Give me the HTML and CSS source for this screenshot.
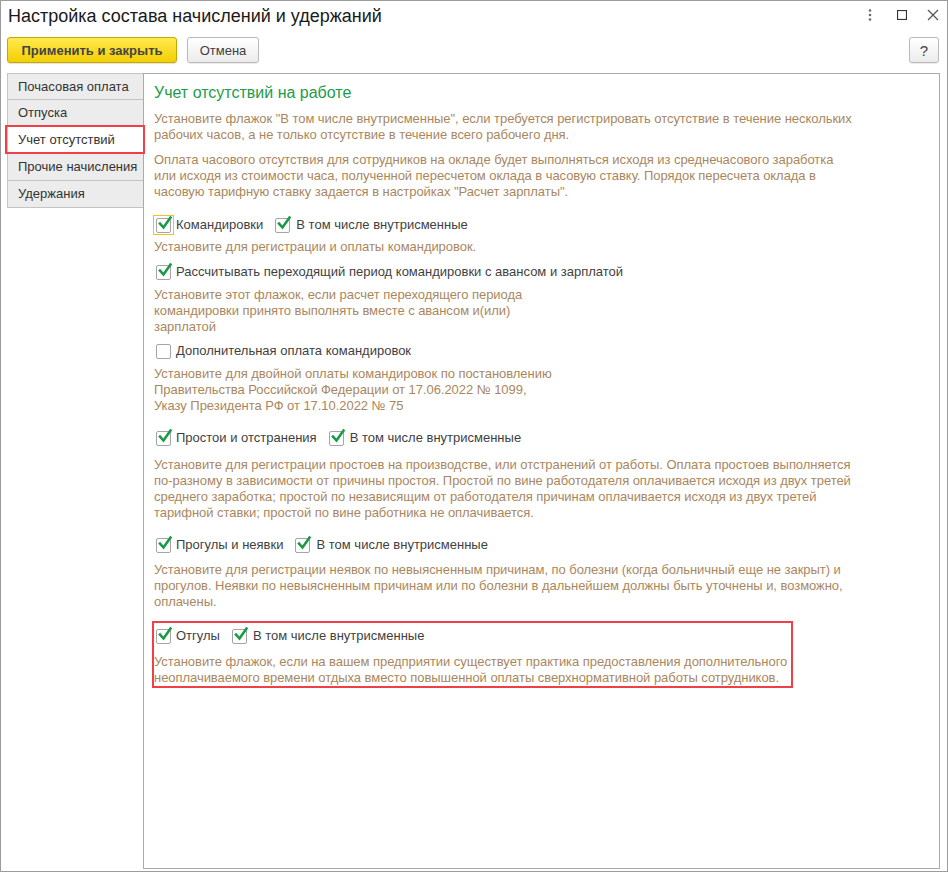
FILE: index.html
```html
<!DOCTYPE html>
<html lang="ru">
<head>
<meta charset="utf-8">
<title>Настройка состава начислений и удержаний</title>
<link rel="stylesheet" href="styles.css">
</head>
<body>
<div class="window">
  <div class="titlebar">
    <div class="title">Настройка состава начислений и удержаний</div>
    <div class="win-icons">
      <svg class="ic-more" width="4" height="12" viewBox="0 0 4 12"><circle cx="2" cy="1.5" r="1.3"/><circle cx="2" cy="6" r="1.3"/><circle cx="2" cy="10.5" r="1.3"/></svg>
      <svg class="ic-max" width="10" height="10" viewBox="0 0 10 10"><rect x="0.5" y="0.5" width="9" height="9"/></svg>
      <svg class="ic-close" width="12" height="12" viewBox="0 0 12 12"><path d="M1 1 L11 11 M11 1 L1 11"/></svg>
    </div>
  </div>
  <div class="toolbar">
    <button class="btn btn-primary">Применить и закрыть</button>
    <button class="btn btn-cancel">Отмена</button>
    <button class="btn btn-help">?</button>
  </div>
  <div class="main">
    <div class="sidebar">
      <div class="tab">Почасовая оплата</div>
      <div class="tab">Отпуска</div>
      <div class="tab tab-active">Учет отсутствий</div>
      <div class="tab">Прочие начисления</div>
      <div class="tab">Удержания</div>
    </div>
    <div class="panel">
      <h1 class="panel-title">Учет отсутствий на работе</h1>
      <p class="note mt8">Установите флажок "В том числе внутрисменные", если требуется регистрировать отсутствие в течение нескольких<br>рабочих часов, а не только отсутствие в течение всего рабочего дня.</p>
      <p class="note mt9">Оплата часового отсутствия для сотрудников на окладе будет выполняться исходя из среднечасового заработка<br>или исходя из стоимости часа, полученной пересчетом оклада в часовую ставку. Порядок пересчета оклада в<br>часовую тарифную ставку задается в настройках "Расчет зарплаты".</p>

      <div class="row mt15">
        <span class="cb cb-focus"><span class="box"><svg class="check" viewBox="0 0 16 16"><path d="M3 7.5 L6.5 11.5 L13.5 1.5"/></svg></span></span>
        <span class="label">Командировки</span>
        <span class="cb cb-next"><span class="box"><svg class="check" viewBox="0 0 16 16"><path d="M3 7.5 L6.5 11.5 L13.5 1.5"/></svg></span></span>
        <span class="label">В том числе внутрисменные</span>
      </div>
      <p class="note mt4">Установите для регистрации и оплаты командировок.</p>

      <div class="row mt7">
        <span class="cb"><span class="box"><svg class="check" viewBox="0 0 16 16"><path d="M3 7.5 L6.5 11.5 L13.5 1.5"/></svg></span></span>
        <span class="label">Рассчитывать переходящий период командировки с авансом и зарплатой</span>
      </div>
      <p class="note mt5">Установите этот флажок, если расчет переходящего периода<br>командировки принято выполнять вместе с авансом и(или)<br>зарплатой</p>

      <div class="row mt6">
        <span class="cb"><span class="box"></span></span>
        <span class="label">Дополнительная оплата командировок</span>
      </div>
      <p class="note mt5">Установите для двойной оплаты командировок по постановлению<br>Правительства Российской Федерации от 17.06.2022 № 1099,<br>Указу Президента РФ от 17.10.2022 № 75</p>

      <div class="row mt14">
        <span class="cb"><span class="box"><svg class="check" viewBox="0 0 16 16"><path d="M3 7.5 L6.5 11.5 L13.5 1.5"/></svg></span></span>
        <span class="label">Простои и отстранения</span>
        <span class="cb cb-next"><span class="box"><svg class="check" viewBox="0 0 16 16"><path d="M3 7.5 L6.5 11.5 L13.5 1.5"/></svg></span></span>
        <span class="label">В том числе внутрисменные</span>
      </div>
      <p class="note mt9">Установите для регистрации простоев на производстве, или отстранений от работы. Оплата простоев выполняется<br>по-разному в зависимости от причины простоя. Простой по вине работодателя оплачивается исходя из двух третей<br>среднего заработка; простой по независящим от работодателя причинам оплачивается исходя из двух третей<br>тарифной ставки; простой по вине работника не оплачивается.</p>

      <div class="row mt14">
        <span class="cb"><span class="box"><svg class="check" viewBox="0 0 16 16"><path d="M3 7.5 L6.5 11.5 L13.5 1.5"/></svg></span></span>
        <span class="label">Прогулы и неявки</span>
        <span class="cb cb-next"><span class="box"><svg class="check" viewBox="0 0 16 16"><path d="M3 7.5 L6.5 11.5 L13.5 1.5"/></svg></span></span>
        <span class="label">В том числе внутрисменные</span>
      </div>
      <p class="note mt7">Установите для регистрации неявок по невыясненным причинам, по болезни (когда больничный еще не закрыт) и<br>прогулов. Неявки по невыясненным причинам или по болезни в дальнейшем должны быть уточнены и, возможно,<br>оплачены.</p>

      <div class="highlight">
        <div class="row">
          <span class="cb"><span class="box"><svg class="check" viewBox="0 0 16 16"><path d="M3 7.5 L6.5 11.5 L13.5 1.5"/></svg></span></span>
          <span class="label">Отгулы</span>
          <span class="cb cb-next"><span class="box"><svg class="check" viewBox="0 0 16 16"><path d="M3 7.5 L6.5 11.5 L13.5 1.5"/></svg></span></span>
          <span class="label">В том числе внутрисменные</span>
        </div>
        <p class="note mt8">Установите флажок, если на вашем предприятии существует практика предоставления дополнительного<br>неоплачиваемого времени отдыха вместо повышенной оплаты сверхнормативной работы сотрудников.</p>
      </div>
    </div>
  </div>
</div>
</body>
</html>
```

FILE: styles.css
```css
* { box-sizing: border-box; }

html, body {
  margin: 0;
  padding: 0;
  background: #ffffff;
}

body {
  font-family: "Liberation Sans", Arial, sans-serif;
  font-size: 13px;
  color: #404040;
}

.window {
  width: 948px;
  height: 872px;
  border: 1px solid #9c9c9c;
  display: flex;
  flex-direction: column;
  background: #fff;
}

.titlebar {
  height: 30px;
  display: flex;
  align-items: center;
  padding: 0 6px 0 7px;
}

.title {
  flex: 1;
  font-size: 18px;
  color: #1a1a1a;
}

.win-icons {
  display: flex;
  align-items: center;
  margin-top: -2px;
}

.ic-more { fill: #6b6b6b; margin-right: 25px; }
.ic-max { fill: none; stroke: #333; stroke-width: 1.2; margin-right: 20px; }
.ic-close { fill: none; stroke: #555; stroke-width: 1.2; margin-right: 2px; }

.toolbar {
  display: flex;
  align-items: center;
  padding: 6px 8px 0 6px;
  gap: 10px;
}

.btn {
  height: 26px;
  font-family: "Liberation Sans", Arial, sans-serif;
  font-size: 13px;
  border-radius: 3px;
  padding: 0;
  cursor: default;
}

.btn-primary {
  width: 170px;
  font-weight: bold;
  color: #444;
  background: linear-gradient(#ffe94e, #f4cf05);
  border: 1px solid #c5a900;
  box-shadow: 0 1px 1px rgba(0,0,0,0.12);
}

.btn-cancel {
  width: 72px;
  color: #404040;
  background: linear-gradient(#ffffff, #ececec);
  border: 1px solid #b9b9b9;
  box-shadow: 0 1px 1px rgba(0,0,0,0.08);
}

.btn-help {
  width: 30px;
  margin-left: auto;
  font-size: 15px;
  color: #404040;
  background: linear-gradient(#ffffff, #ececec);
  border: 1px solid #b9b9b9;
  box-shadow: 0 1px 1px rgba(0,0,0,0.08);
}

.main {
  flex: 1;
  display: flex;
  margin-top: 10px;
  padding: 0 7px 2px 6px;
}

.sidebar {
  width: 136px;
  flex-shrink: 0;
  display: flex;
  flex-direction: column;
}

.tab {
  position: relative;
  height: 27px;
  line-height: 26px;
  padding-left: 10px;
  background: #ececec;
  border: 1px solid #c4c4c4;
  border-top: none;
  border-right: none;
  color: #333;
  font-size: 13px;
  white-space: nowrap;
}

.tab:first-child {
  border-top: 1px solid #c4c4c4;
}

.tab-active {
  background: #ffffff;
}

.tab-active::after {
  content: "";
  position: absolute;
  left: -3px;
  right: -2px;
  top: -2px;
  bottom: -1px;
  border: 2px solid #ef4048;
}

.panel {
  flex: 1;
  border: 1px solid #ababab;
  padding: 9px 10px 0 10px;
}

.panel-title {
  margin: 0;
  height: 20px;
  line-height: 20px;
  font-size: 16px;
  font-weight: normal;
  color: #1d9c4b;
}

.note {
  margin: 0;
  line-height: 16px;
  font-size: 13px;
  letter-spacing: -0.05px;
  color: #a9875e;
  white-space: nowrap;
}

.row {
  display: flex;
  align-items: center;
  height: 20px;
}

.label {
  color: #3f3f3f;
  line-height: 16px;
  white-space: nowrap;
}

.cb {
  width: 21px;
  height: 20px;
  display: flex;
  align-items: center;
  justify-content: center;
  margin-left: -1px;
  margin-right: 2px;
  flex-shrink: 0;
}

.cb-next {
  margin-left: 9px;
  margin-right: 3px;
}

.cb-focus {
  border: 1px solid #f2c318;
}

.box {
  position: relative;
  width: 15px;
  height: 15px;
  border: 1px solid #a5a5a5;
  border-radius: 2px;
  background: #fff;
}

.check {
  position: absolute;
  left: 0;
  top: -3px;
  width: 16px;
  height: 16px;
  overflow: visible;
  fill: none;
  stroke: #1b9a46;
  stroke-width: 2.6;
  stroke-linecap: square;
  stroke-linejoin: miter;
}

.highlight {
  width: 641px;
  margin-top: 11px;
  margin-left: -2px;
  border: 2px solid #ef4048;
  padding: 3px 0 0 0;
}

.mt4 { margin-top: 4px; }
.mt5 { margin-top: 5px; }
.mt6 { margin-top: 6px; }
.mt7 { margin-top: 7px; }
.mt8 { margin-top: 8px; }
.mt9 { margin-top: 9px; }
.mt14 { margin-top: 14px; }
.mt15 { margin-top: 15px; }
```
